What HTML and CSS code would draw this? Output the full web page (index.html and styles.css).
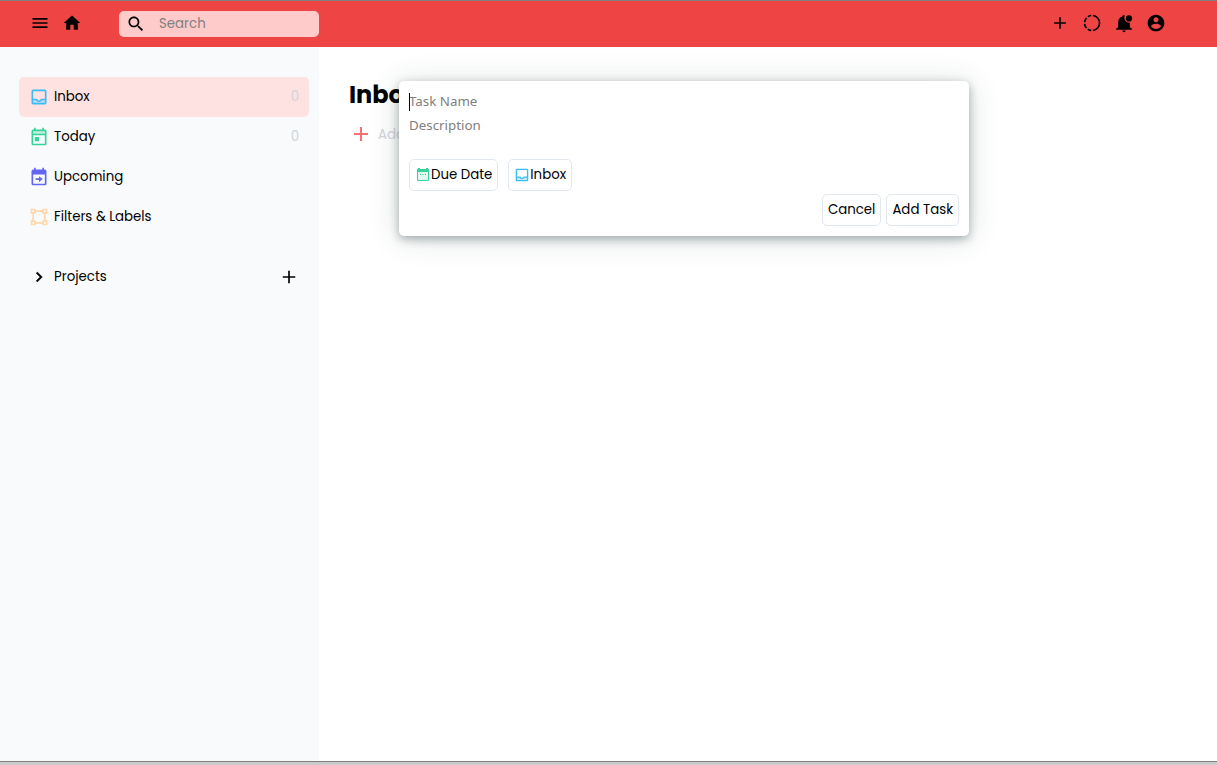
FILE: index.html
```html
<!DOCTYPE html>
<html lang="en">
<head>
<meta charset="utf-8">
<meta name="viewport" content="width=device-width, initial-scale=1">
<title>Inbox</title>
<link rel="stylesheet" href="styles.css">
</head>
<body>
<header class="topbar">
  <div class="topbar-left">
    <button class="icon-btn" aria-label="Menu"><svg class="icon" viewBox="0 0 24 24"><path d="M3 18h18v-2H3v2zm0-5h18v-2H3v2zm0-7v2h18V6H3z"/></svg></button>
    <button class="icon-btn" aria-label="Home"><svg class="icon" viewBox="0 0 24 24"><path d="M10 20v-6h4v6h5v-8h3L12 3 2 12h3v8z"/></svg></button>
    <label class="search">
      <svg class="icon" viewBox="0 0 24 24"><path d="M15.500 14h-.79l-.28-.27C15.410 12.590 16 11.110 16 9.500 16 5.910 13.090 3 9.500 3S3 5.910 3 9.500 5.910 16 9.500 16c1.610 0 3.090-.59 4.230-1.570l.27.28v.79l5 4.990L20.490 19l-4.990-5zm-6 0C7.010 14 5 11.990 5 9.500S7.010 5 9.500 5 14 7.010 14 9.500 11.990 14 9.500 14z"/></svg>
      <input class="search-input" type="text" placeholder="Search" aria-label="Search">
    </label>
  </div>
  <div class="topbar-right">
    <button class="icon-btn" aria-label="Add"><svg class="icon" viewBox="0 0 24 24"><path d="M19 13h-6v6h-2v-6H5v-2h6V5h2v6h6v2z"/></svg></button>
    <button class="icon-btn" aria-label="Progress"><svg class="icon" viewBox="0 0 24 24"><g fill="none" stroke="currentColor" stroke-width="2"><path d="M13 3.050A9 9 0 0 1 13 20.950"/><path d="M11 3.050A9 9 0 0 0 7 4.500M5.500 5.800A9 9 0 0 0 3.050 11M3.050 13A9 9 0 0 0 5.500 18.200M7 19.500A9 9 0 0 0 11 20.950"/></g></svg></button>
    <button class="icon-btn" aria-label="Notifications"><svg class="icon" viewBox="0 0 24 24"><path d="M14 21a2 2 0 0 1-4 0zM13 3A6 6 0 0 0 19 11.700V17l2.500 2v1h-19v-1L5 17v-6c0-3.100 2-5.800 5-6.700V4c0-1 1.500-2 3-1z"/><circle cx="18" cy="6.500" r="3.700"/></svg></button>
    <button class="icon-btn" aria-label="Account"><svg class="icon" viewBox="0 0 24 24"><path d="M12 2C6.480 2 2 6.480 2 12s4.480 10 10 10 10-4.480 10-10S17.520 2 12 2zm0 3c1.660 0 3 1.340 3 3s-1.340 3-3 3-3-1.340-3-3 1.340-3 3-3zm0 14.200c-2.500 0-4.710-1.280-6-3.220.03-1.990 4-3.080 6-3.080 1.990 0 5.970 1.090 6 3.080-1.290 1.940-3.500 3.220-6 3.220z"/></svg></button>
  </div>
</header>
<div class="layout">
  <nav class="sidebar">
    <button class="nav-item active"><svg class="icon sky" viewBox="0 0 24 24"><path opacity=".3" d="M5 15h4l3 2 3-2h4v5H5z"/><path d="M19 3H5c-1.100 0-2 .9-2 2v14c0 1.100.9 2 2 2h14c1.100 0 2-.9 2-2V5c0-1.100-.9-2-2-2zm0 16H5v-3h3.560c.69 1.190 1.970 2 3.450 2s2.750-.81 3.450-2H19v3zm0-5h-4.990c0 1.100-.9 2-2 2s-2-.9-2-2H5V5h14v9z"/></svg><span class="nav-label">Inbox</span><span class="count">0</span></button>
    <button class="nav-item"><svg class="icon green" viewBox="0 0 24 24"><path opacity=".3" d="M5 5h14v4H5z"/><path d="M19 3h-1V1h-2v2H8V1H6v2H5a2 2 0 0 0-2 2v15a2 2 0 0 0 2 2h14a2 2 0 0 0 2-2V5a2 2 0 0 0-2-2zm0 17H5V10h14v10zm0-12H5V5h14v3zM7 12h5v5H7z"/></svg><span class="nav-label">Today</span><span class="count">0</span></button>
    <button class="nav-item"><svg class="icon indigo" viewBox="0 0 24 24"><path d="M19 3h-1V1h-2v2H8V1H6v2H5a2 2 0 0 0-2 2v15a2 2 0 0 0 2 2h14a2 2 0 0 0 2-2V5a2 2 0 0 0-2-2zm0 17H5V9h14v11zM8 13.500v2h4V18l4.500-3.500L12 11v2.500z"/></svg><span class="nav-label">Upcoming</span></button>
    <button class="nav-item"><svg class="icon peach" viewBox="0 0 24 24"><g fill="none" stroke="currentColor" stroke-width="2"><path d="M3 3h4v4H3zM17 3h4v4h-4zM3 17h4v4H3zM17 17h4v4h-4zM7 5h10M7 19h10M5 7v10M19 7v10"/></g></svg><span class="nav-label">Filters &amp; Labels</span></button>
    <div class="projects">
      <button class="projects-toggle"><svg class="icon" viewBox="0 0 24 24"><path d="M10 6 8.600 7.400l4.600 4.600-4.600 4.600L10 18l6-6z" stroke="currentColor" stroke-width=".5"/></svg><span class="nav-label">Projects</span></button>
      <button class="icon-btn" aria-label="Add project"><svg class="icon" viewBox="0 0 24 24"><path d="M19.500 13H13v6.500h-2V13H4.500v-2H11V4.500h2V11h6.500z"/></svg></button>
    </div>
  </nav>
  <main class="content">
    <h1 class="title">Inbox</h1>
    <button class="add-row"><svg class="icon-lg" viewBox="0 0 24 24"><path d="M19 13h-6v6h-2v-6H5v-2h6V5h2v6h6v2z"/></svg><span class="add-label">Add Task</span></button>
    <form class="dialog">
      <div class="field"><input class="text-input" type="text" placeholder="Task Name" aria-label="Task Name"><span class="caret"></span></div>
      <div class="field"><input class="text-input" type="text" placeholder="Description" aria-label="Description"></div>
      <div class="chips">
        <button class="btn chip" type="button"><svg class="icon-sm green" viewBox="0 0 14 14"><path opacity=".15" d="M2 4h10v8H2z"/><path d="M2 1V0h2v1h6V0h2v1a1 1 0 0 1 1 1v10a1 1 0 0 1-1 1H2a1 1 0 0 1-1-1V2a1 1 0 0 1 1-1zM2 4v8h10V4zM4 6h1v1H4zM6.500 6h1v1h-1zM9 6h1v1H9z"/></svg>Due Date</button>
        <button class="btn chip" type="button"><svg class="icon-sm sky" viewBox="2 2 20 20"><path opacity=".3" d="M5 15h4l3 2 3-2h4v5H5z"/><path d="M19 3H5c-1.100 0-2 .9-2 2v14c0 1.100.9 2 2 2h14c1.100 0 2-.9 2-2V5c0-1.100-.9-2-2-2zm0 16H5v-3h3.560c.69 1.190 1.970 2 3.450 2s2.750-.81 3.450-2H19v3zm0-5h-4.990c0 1.100-.9 2-2 2s-2-.9-2-2H5V5h14v9z"/></svg>Inbox</button>
      </div>
      <div class="actions">
        <button class="btn" type="button">Cancel</button>
        <button class="btn" type="button">Add Task</button>
      </div>
    </form>
  </main>
</div>
<div class="bottom-edge"></div>
</body>
</html>
```
FILE: styles.css
```css
* { box-sizing: border-box; }
body {
  margin: 0;
  min-height: 100vh;
  display: flex;
  flex-direction: column;
  border-top: 1px solid #808080;
  background: #fff;
  color: #000;
  font-family: Poppins, Inter, sans-serif;
}
button, input { font-family: inherit; line-height: 20px; color: inherit; margin: 0; padding: 0; border: 0; background: none; }
input { outline: 0; min-width: 0; }
svg { display: block; fill: currentColor; flex: none; }
.icon { width: 20px; height: 20px; }
.icon-lg { width: 24px; height: 24px; color: #f87171; }
.icon-sm { width: 14px; height: 14px; }
.icon-btn { display: flex; }
.sky { color: #38bdf8; }
.green { color: #34d399; }
.indigo { color: #6366f1; }
.peach { color: #fed7aa; }

.topbar {
  display: flex;
  justify-content: space-between;
  align-items: center;
  height: 46px;
  padding: 0 51px 2px 30px;
  background: #ef4444;
}
.topbar-left, .topbar-right { display: flex; align-items: center; gap: 12px; }
.search {
  display: flex;
  align-items: center;
  gap: 13px;
  width: 200px;
  height: 26px;
  margin: 2px 0 0 25px;
  padding: 0 7px;
  border-radius: 5px;
  background: #fecaca;
}
.search-input { flex: 1; }
.search-input::placeholder { color: #808080; opacity: 1; }

.layout { flex: 1; display: flex; }
.sidebar { width: 319px; padding: 30px 10px 30px 19px; background: #f8fafc; }
.nav-item, .projects {
  display: flex;
  align-items: center;
  gap: 5px;
  width: 100%;
  height: 40px;
  padding: 0 10px;
  border-radius: 5px;
  text-align: left;
}
.nav-item.active { background: #fee2e2; }
.nav-label { flex: 1; }
.count { color: #d1d5db; }
.projects { margin-top: 20px; }
.projects-toggle { flex: 1; display: flex; align-items: center; gap: 5px; text-align: left; }

.content { position: relative; flex: 1; padding: 30px; }
.title { margin: 0; font-size: 24px; line-height: 36px; font-weight: 700; }
.add-row { display: flex; align-items: center; gap: 5px; margin-top: 9px; color: #d1d5db; }
.add-label { padding-top: 2px; }

.dialog {
  position: absolute;
  top: 34px;
  left: 80px;
  width: 570px;
  max-width: calc(100% - 100px);
  padding: 10px;
  border-radius: 5px;
  background: #fff;
  box-shadow: 0 3px 10px rgba(50, 70, 70, .4), 0 2px 30px rgba(50, 70, 70, .18);
}
.field { position: relative; height: 24px; display: flex; font-family: "Noto Sans", sans-serif; }
.text-input { flex: 1; height: 20px; }
.text-input::placeholder { color: #808080; opacity: 1; }
.caret { position: absolute; left: 0; top: 2px; width: 1px; height: 18px; background: #000; }
.chips { display: flex; gap: 10px; margin-top: 20px; }
.actions { display: flex; justify-content: flex-end; gap: 5px; margin-top: 3px; }
.btn {
  display: flex;
  align-items: center;
  height: 32px;
  padding: 0 5px;
  border: 1px solid #e2e8f0;
  border-radius: 5px;
}
.chip { gap: 1px; padding-left: 6px; }

.bottom-edge { height: 4px; border-top: 1px solid #808080; background: #cbcbcb; }
```
